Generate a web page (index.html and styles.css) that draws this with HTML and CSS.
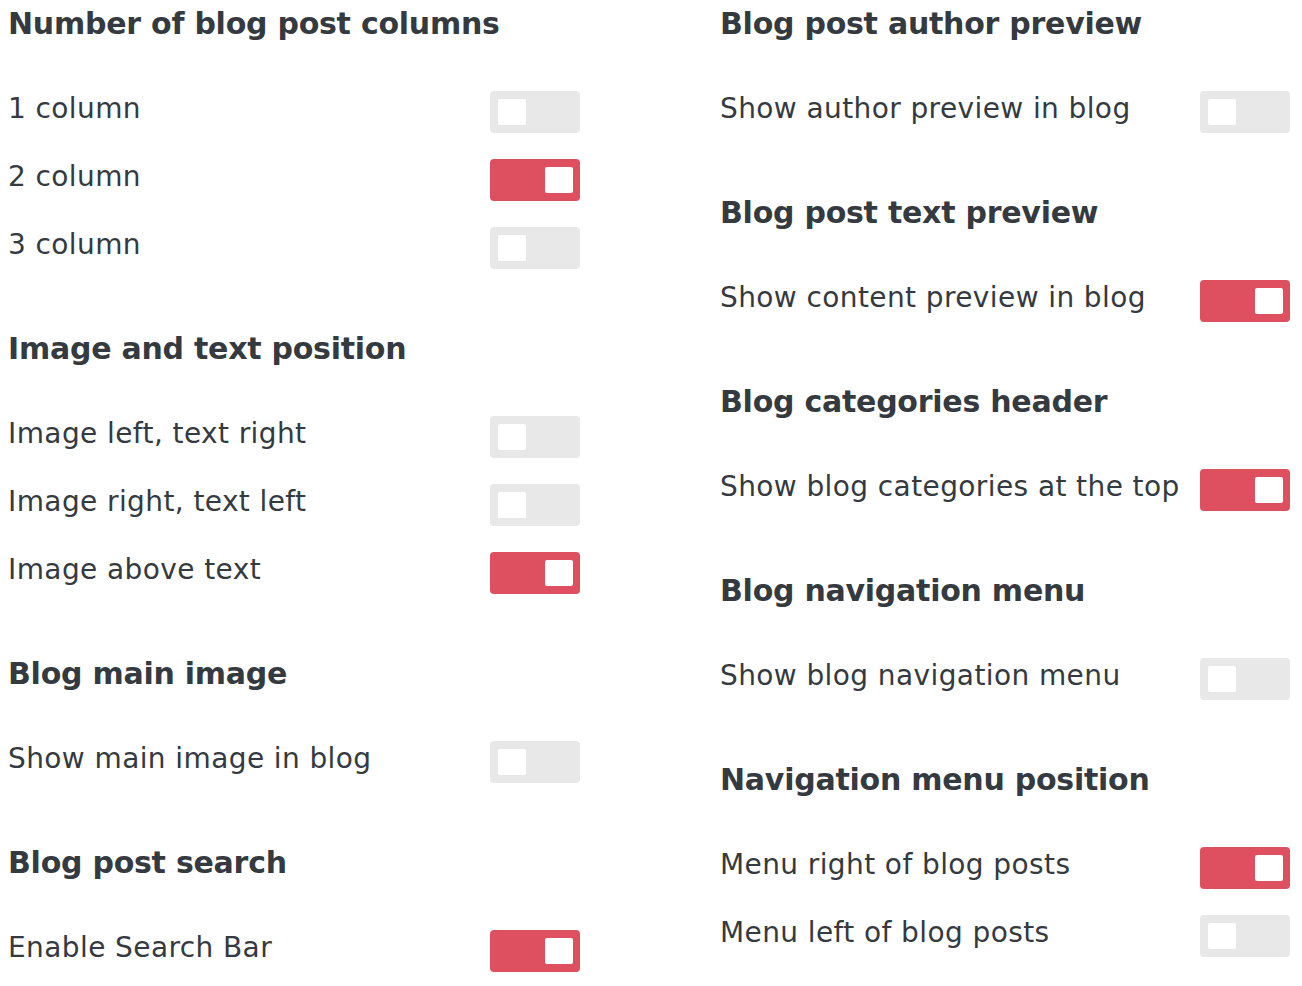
FILE: index.html
```html
<!DOCTYPE html>
<html lang="en">
<head>
<meta charset="utf-8">
<title>Blog settings</title>
<link rel="stylesheet" href="styles.css">
</head>
<body>
<main class="settings">
  <div class="col">
    <section class="group">
      <h2 class="group-title">Number of blog post columns</h2>
      <div class="option"><span class="option-label">1 column</span><span class="toggle"><span class="knob"></span></span></div>
      <div class="option"><span class="option-label">2 column</span><span class="toggle on"><span class="knob"></span></span></div>
      <div class="option"><span class="option-label">3 column</span><span class="toggle"><span class="knob"></span></span></div>
    </section>
    <section class="group">
      <h2 class="group-title">Image and text position</h2>
      <div class="option"><span class="option-label">Image left, text right</span><span class="toggle"><span class="knob"></span></span></div>
      <div class="option"><span class="option-label">Image right, text left</span><span class="toggle"><span class="knob"></span></span></div>
      <div class="option"><span class="option-label">Image above text</span><span class="toggle on"><span class="knob"></span></span></div>
    </section>
    <section class="group">
      <h2 class="group-title">Blog main image</h2>
      <div class="option"><span class="option-label">Show main image in blog</span><span class="toggle"><span class="knob"></span></span></div>
    </section>
    <section class="group">
      <h2 class="group-title">Blog post search</h2>
      <div class="option"><span class="option-label">Enable Search Bar</span><span class="toggle on"><span class="knob"></span></span></div>
    </section>
  </div>
  <div class="col">
    <section class="group">
      <h2 class="group-title">Blog post author preview</h2>
      <div class="option"><span class="option-label">Show author preview in blog</span><span class="toggle"><span class="knob"></span></span></div>
    </section>
    <section class="group">
      <h2 class="group-title">Blog post text preview</h2>
      <div class="option"><span class="option-label">Show content preview in blog</span><span class="toggle on"><span class="knob"></span></span></div>
    </section>
    <section class="group">
      <h2 class="group-title">Blog categories header</h2>
      <div class="option"><span class="option-label">Show blog categories at the top</span><span class="toggle on"><span class="knob"></span></span></div>
    </section>
    <section class="group">
      <h2 class="group-title">Blog navigation menu</h2>
      <div class="option"><span class="option-label">Show blog navigation menu</span><span class="toggle"><span class="knob"></span></span></div>
    </section>
    <section class="group">
      <h2 class="group-title">Navigation menu position</h2>
      <div class="option"><span class="option-label">Menu right of blog posts</span><span class="toggle on"><span class="knob"></span></span></div>
      <div class="option"><span class="option-label">Menu left of blog posts</span><span class="toggle"><span class="knob"></span></span></div>
    </section>
  </div>
</main>
</body>
</html>
```
FILE: styles.css
```css
html, body {
  background: #ffffff;
}

body {
  margin: 8px;
  font-family: "DejaVu Sans", "Liberation Sans", sans-serif;
  color: #343a40;
}

.settings {
  display: grid;
  grid-template-columns: 572px 570px;
  column-gap: 140px;
  align-items: start;
}

.group + .group {
  margin-top: 51px;
}

.group-title {
  margin: 0 0 38px;
  font-size: 30px;
  line-height: 32px;
  font-weight: 700;
  letter-spacing: -0.25px;
}

.option {
  display: flex;
  justify-content: space-between;
  align-items: center;
  height: 68px;
}

.option-label {
  font-size: 28px;
  letter-spacing: 0.4px;
  line-height: 34px;
  margin-bottom: 6px;
  white-space: nowrap;
}

.toggle {
  flex: none;
  display: flex;
  align-items: center;
  justify-content: flex-start;
  box-sizing: border-box;
  width: 90px;
  height: 42px;
  padding: 0 8px;
  border-radius: 4px;
  background: #e8e8e8;
}

.toggle.on {
  justify-content: flex-end;
  padding: 0 7px;
  background: #de4f5f;
}

.knob {
  width: 28px;
  height: 26px;
  border-radius: 2px;
  background: #ffffff;
}
```
